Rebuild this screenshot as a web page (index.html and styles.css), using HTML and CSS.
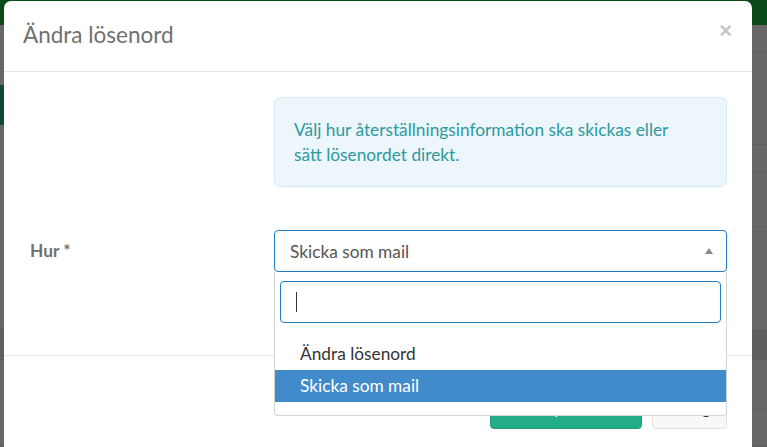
FILE: index.html
```html
<!DOCTYPE html>
<html lang="sv">
<head>
<meta charset="utf-8">
<title>Ändra lösenord</title>
<link rel="stylesheet" href="styles.css">
</head>
<body>
<div class="page">
  <div class="navbar"></div>
  <div class="bg-content">
    <div class="bg-row r1"></div>
    <div class="bg-row r2"><span class="bg-btn"></span></div>
    <div class="bg-row r3"></div>
    <div class="bg-row r4"></div>
    <div class="bg-row r5"></div>
    <div class="bg-row r6 dark"></div>
    <div class="bg-row r7"></div>
    <div class="bg-row r8"></div>
  </div>
</div>

<div class="modal">
  <div class="modal-header">
    <h4 class="modal-title">Ändra lösenord</h4>
    <span class="close">×</span>
  </div>
  <div class="modal-body">
    <div class="form-row">
      <div></div>
      <div class="alert">Välj hur återställningsinformation ska skickas eller sätt lösenordet direkt.</div>
    </div>
    <div class="form-row group">
      <label class="label">Hur *</label>
      <div class="select-wrap">
        <div class="select">
          <span class="select-value">Skicka som mail</span>
          <span class="arrow"></span>
        </div>
        <div class="dropdown">
          <div class="search"><span class="caret"></span></div>
          <ul class="options">
            <li class="option">Ändra lösenord</li>
            <li class="option active">Skicka som mail</li>
          </ul>
        </div>
      </div>
    </div>
  </div>
  <div class="modal-footer">
    <button class="btn btn-primary">Spara</button>
    <button class="btn btn-default">Stäng</button>
  </div>
</div>
</body>
</html>
```

FILE: styles.css
```css
* { box-sizing: border-box; }
html, body { margin: 0; padding: 0; }
body {
  width: 767px;
  height: 447px;
  overflow: hidden;
  font-family: Lato, "Open Sans", sans-serif;
  background: #676767;
  position: relative;
}

.page { display: flex; flex-direction: column; height: 447px; }
.navbar { height: 25px; background: #0c4a1c; }
.bg-content { flex: 1; display: flex; flex-direction: column; }
.bg-row { border-bottom: 1px solid #5e5e5e; }
.r1 { height: 28px; }
.r2 { height: 92px; display: flex; align-items: flex-start; padding-top: 32px; }
.bg-btn { width: 4px; height: 40px; background: #0f4a34; }
.r3 { height: 28px; }
.r4 { height: 54px; }
.r5 { height: 103px; }
.r6 { height: 30px; background: #5f5f5f; }
.r7 { height: 50px; }
.r8 { flex: 1; }

.modal {
  position: absolute;
  top: 1px;
  left: 4px;
  width: 748px;
  height: 470px;
  background: #fff;
  border-radius: 7px 7px 0 0;
  overflow: hidden;
}

.modal-header {
  height: 71px;
  border-bottom: 1px solid #e5e5e5;
  display: flex;
  align-items: center;
  justify-content: space-between;
  padding: 0 20px 4px 19px;
}
.modal-title {
  margin: 0;
  font-size: 22.5px;
  font-weight: 400;
  color: #707070;
}
.close {
  font-size: 22px;
  font-weight: 700;
  color: #c6c6c6;
  line-height: 1;
  font-family: "Liberation Sans", Arial, sans-serif;
  margin-bottom: 6px;
}

.modal-body { padding: 25px 25px 83px 26px; }
.form-row {
  display: grid;
  grid-template-columns: 244px 1fr;
}
.group { margin-top: 43px; align-items: center; }

.alert {
  background: #edf6fc;
  border: 1px solid #d0eef3;
  border-radius: 6px;
  color: #2e9aa0;
  font-size: 17.3px;
  line-height: 25px;
  padding: 19px 45px 19px 19px;
}

.label {
  font-size: 17.3px;
  font-weight: 700;
  color: #707070;
  padding-bottom: 2px;
}

.select-wrap { position: relative; }
.select {
  height: 42px;
  border: 1px solid #1f7ec2;
  border-radius: 4px;
  display: flex;
  align-items: center;
  justify-content: space-between;
  padding: 0 13px 0 15px;
}
.select-value { font-size: 17.3px; color: #555; }
.arrow {
  width: 0;
  height: 0;
  border-left: 4px solid transparent;
  border-right: 4px solid transparent;
  border-bottom: 6px solid #888;
  margin-bottom: 1px;
}

.dropdown {
  position: absolute;
  top: 100%;
  left: 0;
  right: 0;
  background: #fff;
  border: 1px solid #d4d4d4;
  border-top: none;
  border-radius: 0 0 4px 4px;
  padding: 9px 0 13px;
  z-index: 2;
}
.search {
  margin: 0 5px;
  height: 42px;
  border: 1px solid #1f7ec2;
  border-radius: 4px;
  display: flex;
  align-items: center;
  padding-left: 15px;
}
.caret { width: 1px; height: 20px; background: #333; }
.options { list-style: none; margin: 15px 0 0; padding: 0; }
.option {
  height: 32px;
  line-height: 32px;
  padding-left: 25px;
  font-size: 17.3px;
  color: #333;
}
.option.active { background: #428bca; color: #fff; }

.modal-footer {
  border-top: 1px solid #e5e5e5;
  display: flex;
  justify-content: flex-end;
  gap: 10px;
  padding: 30px 25px 0;
}
.btn {
  height: 43px;
  border-radius: 4px;
  font-family: Lato, sans-serif;
  font-size: 17px;
  padding: 0 16px;
}
.btn-primary { width: 152px; background: #22ad88; border: 1px solid #1e9c7a; color: #fff; }
.btn-default { width: 75px; background: #f8f8f8; border: 1px solid #e2e2e2; color: #333; }
```
